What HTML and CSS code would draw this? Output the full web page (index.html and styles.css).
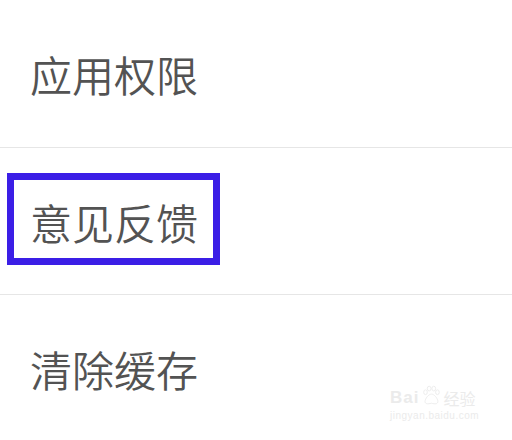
FILE: index.html
```html
<!DOCTYPE html>
<html lang="zh-CN">
<head>
<meta charset="utf-8">
<title>设置</title>
<link rel="stylesheet" href="styles.css">
</head>
<body>
<ul class="menu">
  <li class="row row-first"><span class="label">应用权限</span></li>
  <li class="row row-mid">
    <div class="highlight"><span class="label">意见反馈</span></div>
  </li>
  <li class="row row-last"><span class="label">清除缓存</span></li>
</ul>
<div class="watermark">
  <div class="wm-brand">
    <span class="wm-bai">Bai</span>
    <svg class="wm-paw" viewBox="0 0 24 24" width="22" height="22" aria-hidden="true">
      <ellipse cx="6" cy="9" rx="2" ry="2.6" fill="none" stroke="#ebebeb" stroke-width="1"/>
      <ellipse cx="10" cy="5" rx="2" ry="2.6" fill="none" stroke="#ebebeb" stroke-width="1"/>
      <ellipse cx="15" cy="5" rx="2" ry="2.6" fill="none" stroke="#ebebeb" stroke-width="1"/>
      <ellipse cx="19" cy="9" rx="2" ry="2.6" fill="none" stroke="#ebebeb" stroke-width="1"/>
      <path d="M12.5 11c-3 0-7 5-7 8s3 3 7 2c4 1 7 1 7-2s-4-8-7-8z" fill="none" stroke="#ebebeb" stroke-width="1"/>
    </svg>
    <span class="wm-jy">经验</span>
  </div>
  <div class="wm-url">jingyan.baidu.com</div>
</div>
</body>
</html>
```

FILE: styles.css
```css
html, body {
  margin: 0;
  padding: 0;
  background: #ffffff;
}

body {
  width: 512px;
  height: 440px;
  overflow: hidden;
  position: relative;
  font-family: "Noto Sans CJK SC", "Noto Sans", sans-serif;
}

.menu {
  list-style: none;
  margin: 0;
  padding: 0;
}

.row {
  display: flex;
  align-items: center;
  box-sizing: border-box;
}

.row-first {
  height: 148px;
  padding-left: 30px;
  border-bottom: 1px solid #e6e6e6;
}

.row-mid {
  height: 147px;
  padding-left: 7px;
  border-bottom: 1px solid #e6e6e6;
  align-items: flex-start;
  padding-top: 25px;
}

.row-last {
  height: 147px;
  padding-left: 30px;
}

.label {
  font-size: 42px;
  line-height: 1;
  font-weight: 350;
  color: #535353;
  letter-spacing: 0;
}

.highlight {
  box-sizing: border-box;
  width: 213px;
  height: 92px;
  border: 7px solid #3b1ee6;
  display: flex;
  align-items: center;
  padding-left: 16px;
  padding-top: 6px;
}

.watermark {
  position: absolute;
  left: 390px;
  top: 384px;
  color: #ebebeb;
  font-family: "Liberation Sans", sans-serif;
}

.wm-brand {
  display: flex;
  align-items: flex-end;
  gap: 1px;
}

.wm-bai {
  font-size: 17px;
  line-height: 1;
  font-weight: bold;
  letter-spacing: 1px;
}

.wm-paw {
  display: block;
}

.wm-jy {
  font-family: "Noto Sans CJK SC", sans-serif;
  font-size: 16px;
  line-height: 1;
}

.wm-url {
  font-size: 10px;
  line-height: 1;
  margin-top: 5px;
  letter-spacing: 0.5px;
}
```
